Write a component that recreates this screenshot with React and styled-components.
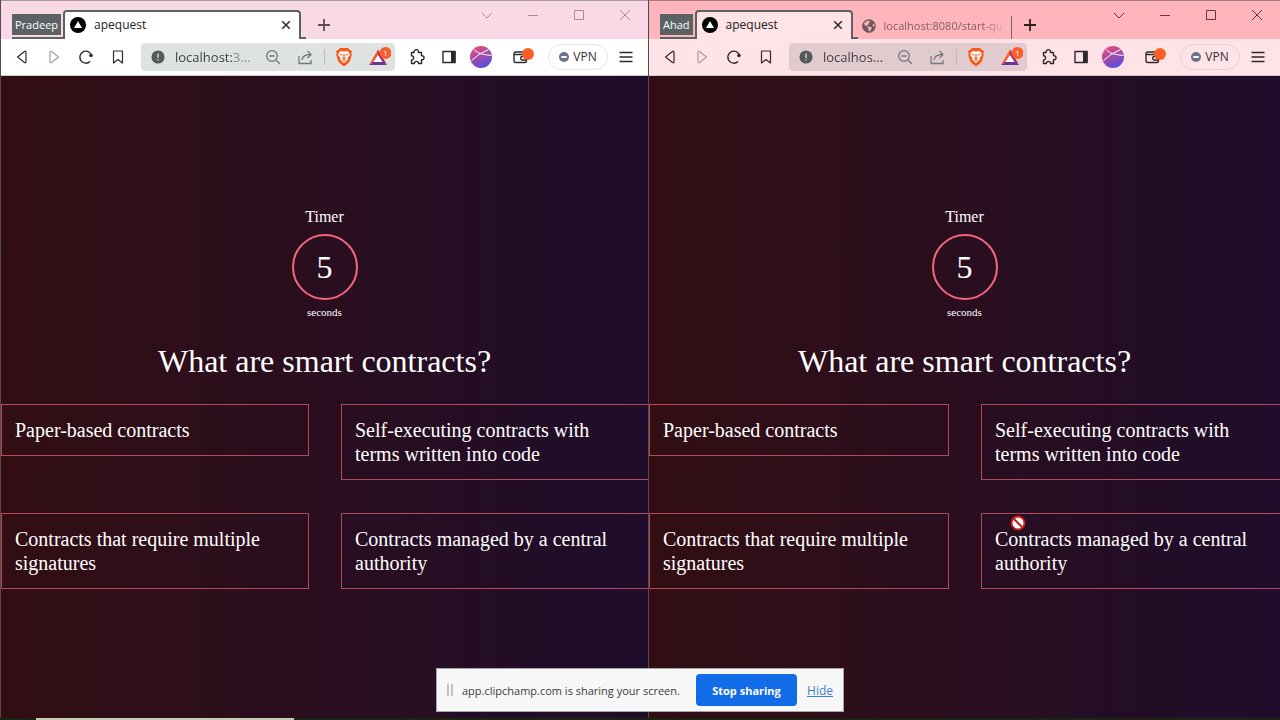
import React from "react";
import styled, { createGlobalStyle } from "styled-components";
import { FaGlobeAmericas } from "react-icons/fa";

const GlobalStyle = createGlobalStyle`
  * {
    box-sizing: border-box;
  }

  body {
    margin: 0;
    background-color: #1c2416;
    font-family: "Open Sans", "Noto Sans", sans-serif;
  }

  button {
    padding: 0;
    border: 0;
    background: none;
    font-family: inherit;
  }
`;

const Desktop = styled.div`
  display: flex;
  flex-direction: column;
  min-height: 100vh;
`;

const Windows = styled.div`
  display: grid;
  grid-template-columns: 81fr 79fr;
  flex: 1;
`;

const Taskbar = styled.footer`
  height: 2px;
  background: linear-gradient(
    90deg,
    #1c2416 36px,
    #c3ccb3 36px,
    #c3ccb3 294px,
    #1c2416 294px
  );
`;

const Window = styled.section`
  display: flex;
  flex-direction: column;
  min-width: 0;
  overflow: hidden;
  border-left: 1px solid #55484c;
`;

const TabStrip = styled.header`
  display: flex;
  align-items: flex-end;
  height: 39px;
  padding-left: 11px;
  border-top: 1px solid ${({ $edge }) => $edge};
  background-color: ${({ $color }) => $color};
`;

const Group = styled.div`
  height: 25px;
  padding-right: 2px;
  border-bottom: 2px solid #5b6264;
`;

const GroupButton = styled.button`
  display: block;
  height: 21px;
  padding: 0 3px;
  background-color: #5b6264;
  color: #fff;
  font-size: 11px;
  line-height: 20px;
`;

const Tab = styled.div`
  display: flex;
  align-items: center;
  gap: 8px;
  width: ${({ $width }) => $width}px;
  height: 29px;
  padding: 0 4px 2px 5px;
  border: 2px solid #5b6264;
  border-bottom: 0;
  border-radius: 4px 4px 0 0;
  background-color: ${({ $color }) => $color};
  color: #222;
  font-size: 12px;
  font-weight: 500;
`;

const TabFoot = styled.div`
  width: 5px;
  height: 2px;
  background-color: #5b6264;
`;

const TabTitle = styled.span`
  flex: 1;
  white-space: nowrap;
`;

const IdleTab = styled.div`
  display: flex;
  align-items: center;
  gap: 8px;
  width: 154px;
  height: 23px;
  padding: 0 4px 4px;
  border-right: 1px solid #7f6165;
  color: #805f63;
  font-size: 11px;

  svg {
    flex: none;
  }

  span {
    mask-image: linear-gradient(90deg, #000 80%, transparent);
  }
`;

const IconButton = styled.button`
  display: flex;
  align-items: center;
  justify-content: center;
  flex: none;
  width: 32px;
  height: 28px;
  color: ${({ $color }) => $color || "#2b2b2d"};
`;

const CloseTab = styled(IconButton)`
  width: 18px;
  height: 18px;
`;

const NewTab = styled(IconButton)`
  margin-left: 2px;
`;

const Controls = styled.div`
  display: flex;
  align-self: flex-start;
  margin-left: auto;

  button {
    width: 46px;
  }
`;

const Toolbar = styled.div`
  display: flex;
  align-items: center;
  height: 37px;
  padding: 0 6px 1px 5px;
  border-bottom: 1px solid #d0c9cb;
  background-color: ${({ $color }) => $color};
`;

const Address = styled.div`
  display: flex;
  align-items: center;
  flex: 1;
  min-width: 0;
  height: 28px;
  margin: 0 6px 0 7px;
  padding-left: 10px;
  border-radius: 4px;
  background-color: ${({ $color }) => $color};
  color: #55595c;
`;

const AddressInput = styled.input`
  flex: 1;
  min-width: 0;
  margin-left: 10px;
  padding: 0;
  border: 0;
  outline: 0;
  background: linear-gradient(
    90deg,
    #3a3b3e ${({ $host }) => $host}px,
    #85888b ${({ $host }) => $host}px
  );
  background-clip: text;
  color: transparent;
  font-family: inherit;
  font-size: 13px;
`;

const Divider = styled.span`
  width: 1px;
  height: 16px;
  margin: 0 3px;
  background-color: #bcbcbe;
`;

const Shields = styled(IconButton)`
  margin-right: 3px;
`;

const Wallet = styled(IconButton)`
  margin: 0 9px 0 10px;
`;

const Vpn = styled.button`
  display: flex;
  align-items: center;
  justify-content: center;
  gap: 4px;
  width: 60px;
  height: 26px;
  margin-right: 2px;
  border: 1px solid ${({ $edge }) => $edge};
  border-radius: 13px;
  color: #303238;
  font-size: 12px;
`;

const Page = styled.main`
  display: flex;
  flex: 1;
  flex-direction: column;
  align-items: center;
  justify-content: center;
  background: linear-gradient(90deg, #320e13, #290e1f 50%, #1f0d2b);
  color: #fff;
  font-family: "Liberation Serif", serif;
`;

const TimerLabel = styled.div`
  margin-bottom: 5px;
  font-size: 16px;
  line-height: 24px;
`;

const TimerCircle = styled.div`
  display: flex;
  align-items: center;
  justify-content: center;
  width: 66px;
  height: 66px;
  border: 2px solid #f5667a;
  border-radius: 50%;
  font-size: 32px;
`;

const Seconds = styled.div`
  margin: 4px 0 21px;
  font-size: 11px;
  line-height: 16px;
`;

const Question = styled.h1`
  margin: 0 0 23px;
  font-size: 32px;
  font-weight: 400;
  line-height: 40px;
`;

/* the grid runs one pixel past the window, so the last border is cut off */
const Answers = styled.div`
  display: grid;
  grid-template-columns: 1fr 1fr;
  align-items: start;
  align-self: stretch;
  gap: 33px 32px;
  margin-right: -1px;
`;

const Answer = styled.button`
  padding: 13px;
  border: 1px solid #b24a5b;
  color: #fff;
  font-size: 20px;
  line-height: 24px;
  text-align: left;
  cursor: not-allowed;
`;

const ShareBar = styled.aside`
  position: fixed;
  bottom: 8px;
  left: 50%;
  display: flex;
  align-items: center;
  width: 408px;
  height: 44px;
  padding: 0 10px;
  transform: translateX(-50%);
  border: 1px solid #a5a5a8;
  background-color: #f7f7f8;
  color: #3c3c3e;
  font-size: 11px;
  white-space: nowrap;
`;

const Grip = styled.span`
  width: 6px;
  height: 12px;
  margin-right: 9px;
  border: solid #c3c3c5;
  border-width: 0 2px;
`;

const StopButton = styled.button`
  width: 101px;
  height: 32px;
  margin: 0 10px 0 auto;
  border-radius: 4px;
  background-color: #126ce8;
  color: #fff;
  font-size: 11px;
  font-weight: 700;
`;

const HideLink = styled.a`
  color: #3f7fc8;
  font-size: 12px;
`;

const Cursor = styled.svg`
  position: fixed;
  top: 515px;
  left: 1010px;
`;

const Icon = ({ size = 16, children, ...rest }) => (
  <svg
    width={size}
    height={size}
    viewBox="0 0 16 16"
    fill="none"
    stroke="currentColor"
    strokeWidth="1.2"
    aria-hidden="true"
    {...rest}
  >
    {children}
  </svg>
);

const SiteLogo = () => (
  <Icon stroke="none">
    <circle cx="8" cy="8" r="8" fill="#000" />
    <path d="M8 4l4 7H4z" fill="#fff" />
  </Icon>
);

const BraveIcon = () => (
  <Icon size={20} viewBox="0 0 20 20" stroke="none">
    <path d="M6 1h8l2 2 2 1-.6 2 .3 2-1.700 6-2 2.500L10 19.500 6 16.500 4 14 2.300 8l.3-2L2 4l2-1z" fill="#f9591c" />
    <path d="M6.500 4L10 4.600 13.500 4l2.300 3-.5 2-2 2 .6 1.500L10 16l-3.900-3.500.6-1.500-2-2-.5-2z" fill="#fff" />
    <path d="M6 7.500l2.500.5M14 7.500l-2.500.5M10 7v4M8 11.500l2-.6 2 .6M8.500 13.500L10 13l1.500.5" stroke="#f9591c" />
  </Icon>
);

const RewardsIcon = () => (
  <Icon size={24} viewBox="0 0 24 24" stroke="none">
    <path d="M11 4.500L2 20l5-3 4-6z" fill="#f9592b" />
    <path d="M11 4.500L20 20l-5-3-4-6z" fill="#9b2c6f" />
    <path d="M2 20h18l-5-3.500H7z" fill="#6a3595" />
    <path d="M11 10l4.500 7h-9z" fill="#fff" />
    <circle cx="18.500" cy="8" r="6" fill="#fb5e2a" />
    <text x="18.500" y="11" fontSize="8" textAnchor="middle" fill="#fff">1</text>
  </Icon>
);

const PuzzleIcon = () => (
  <Icon strokeWidth="1.400">
    <path
      d="M2.500 3.500H5.200a2.200 2.200 0 114.200 0h3.100v3.200a2.100 2.100 0 110 4.100v3.700H9.600a2.100 2.100 0 00-4.200 0H2.500v-3.500a2.100 2.100 0 000-4.200z"
      strokeLinejoin="round"
    />
  </Icon>
);

const Avatar = ({ id }) => (
  <Icon size={22} viewBox="0 0 22 22">
    <defs>
      <linearGradient id={id} x1="0.2" y1="0" x2="0.7" y2="1">
        <stop offset="0" stopColor="#ee4a78" />
        <stop offset="0.5" stopColor="#a04cab" />
        <stop offset="1" stopColor="#504ee0" />
      </linearGradient>
    </defs>
    <circle cx="11" cy="11" r="11" fill={`url(#${id})`} stroke="none" />
    <path d="M1.500 14.500Q8 8 18.500 3.500M4 3.500Q8 8.500 21.500 9.500" stroke="#fff" strokeWidth="1" />
  </Icon>
);

const WalletIcon = () => (
  <Icon size={22} viewBox="0 0 22 22" strokeWidth="1.400">
    <path d="M12 6H3.500A1.500 1.500 0 002 7.500V15a1.500 1.500 0 001.500 1.500H13a1.500 1.500 0 001.500-1.500v-1M2 8.500h10M14.500 10.500H10a1.800 1.800 0 000 3.500h4.500z" />
    <circle cx="16" cy="8" r="6" fill="#fd5e26" stroke="none" />
  </Icon>
);

const ArrowIcon = ({ flip }) => (
  <Icon>
    <path
      d={flip ? "M4 3.200v9.600q.2 1.500 1.500.7L12.500 8 5.500 2.500Q4.200 1.700 4 3.200z" : "M12 3.200v9.600q-.2 1.500-1.500.7L3.500 8l7-5.500q1.300-.8 1.500.7z"}
      strokeLinejoin="round"
    />
  </Icon>
);

const windows = [
  {
    id: "pradeep",
    user: "Pradeep",
    frame: "#f9d9e6",
    edge: "#a99aa1",
    bar: "#ffffff",
    field: "#dfe2e2",
    pill: "#e4e5e7",
    controls: "#a08e97",
    newTab: "#5c5056",
    tabWidth: 238,
    address: "localhost:3...",
    host: 57,
  },
  {
    id: "ahad",
    user: "Ahad",
    frame: "#ffb5bb",
    edge: "#a87a7f",
    bar: "#ffe3e6",
    field: "#e1cbce",
    pill: "#efcfd3",
    controls: "#573b3f",
    newTab: "#2e1d20",
    tabWidth: 158,
    idleTab: "localhost:8080/start-qu",
    address: "localhos...",
    host: 90,
  },
];

const answers = [
  "Paper-based contracts",
  "Self-executing contracts with terms written into code",
  "Contracts that require multiple signatures",
  "Contracts managed by a central authority",
];

const Quiz = () => (
  <Page>
    <TimerLabel>Timer</TimerLabel>
    <TimerCircle>5</TimerCircle>
    <Seconds>seconds</Seconds>
    <Question>What are smart contracts?</Question>
    <Answers>
      {answers.map((answer) => (
        <Answer key={answer}>{answer}</Answer>
      ))}
    </Answers>
  </Page>
);

const Browser = ({ win }) => (
  <Window>
    <TabStrip $color={win.frame} $edge={win.edge}>
      <Group>
        <GroupButton>{win.user}</GroupButton>
      </Group>
      <Tab $width={win.tabWidth} $color={win.bar}>
        <SiteLogo />
        <TabTitle>apequest</TabTitle>
        <CloseTab aria-label="Close tab">
          <Icon size={10} strokeWidth="2.4">
            <path d="M2 2l12 12M14 2L2 14" />
          </Icon>
        </CloseTab>
      </Tab>
      <TabFoot />
      {win.idleTab && (
        <IdleTab>
          <FaGlobeAmericas size={14} color="#6b5a5e" />
          <TabTitle>{win.idleTab}</TabTitle>
        </IdleTab>
      )}
      <NewTab aria-label="New tab" $color={win.newTab}>
        <Icon size={12} strokeWidth="2.4">
          <path d="M8 0v16M0 8h16" />
        </Icon>
      </NewTab>
      <Controls>
        <IconButton $color={win.controls} aria-label="Search tabs">
          <Icon strokeWidth="1"><path d="M3 6l5 5 5-5" /></Icon>
        </IconButton>
        <IconButton $color={win.controls} aria-label="Minimize">
          <Icon strokeWidth="1"><path d="M3 8.500h10" /></Icon>
        </IconButton>
        <IconButton $color={win.controls} aria-label="Maximize">
          <Icon strokeWidth="1"><path d="M3.500 3.500h9v9h-9z" /></Icon>
        </IconButton>
        <IconButton $color={win.controls} aria-label="Close">
          <Icon strokeWidth="1"><path d="M3 3l10 10M13 3L3 13" /></Icon>
        </IconButton>
      </Controls>
    </TabStrip>
    <Toolbar $color={win.bar}>
      <IconButton aria-label="Back"><ArrowIcon /></IconButton>
      <IconButton aria-label="Forward" $color="#a5a0a2"><ArrowIcon flip /></IconButton>
      <IconButton aria-label="Reload">
        <Icon strokeWidth="1.4">
          <path d="M12 12.500A6 6 0 1113.200 5.500" />
          <circle cx="13" cy="6.500" r="1.800" fill="currentColor" stroke="none" />
        </Icon>
      </IconButton>
      <IconButton aria-label="Bookmark">
        <Icon><path d="M3.500 2h9v12L8 10.500 3.500 14z" strokeLinejoin="round" /></Icon>
      </IconButton>
      <Address $color={win.field}>
        <Icon size={14} stroke="none">
          <circle cx="8" cy="8" r="7.5" fill="currentColor" />
          <path d="M8 4v5M8 10.500v1.500" stroke="#dcdcdd" strokeWidth="1.5" />
        </Icon>
        <AddressInput aria-label="Address" defaultValue={win.address} $host={win.host} />
        <IconButton aria-label="Zoom" $color="#77797c">
          <Icon strokeWidth="1.3">
            <circle cx="7" cy="7" r="5.3" />
            <path d="M11 11l4 4M4.500 7h5" />
          </Icon>
        </IconButton>
        <IconButton aria-label="Share" $color="#77797c">
          <Icon strokeWidth="1.3">
            <path d="M2 7v7.500h12V11M5 11q.5-5.500 8.500-5.500M10.500 2l3.500 3.500L10.500 9" />
          </Icon>
        </IconButton>
        <Divider />
        <Shields aria-label="Brave Shields"><BraveIcon /></Shields>
        <IconButton aria-label="Brave Rewards"><RewardsIcon /></IconButton>
      </Address>
      <IconButton aria-label="Extensions"><PuzzleIcon /></IconButton>
      <IconButton aria-label="Sidebar">
        <Icon>
          <path d="M2 2.500h12v11H2z" strokeWidth="1.4" />
          <path d="M10 2h4.500v12H10z" fill="currentColor" stroke="none" />
        </Icon>
      </IconButton>
      <IconButton aria-label="Profile"><Avatar id={win.id} /></IconButton>
      <Wallet aria-label="Wallet"><WalletIcon /></Wallet>
      <Vpn $edge={win.pill}>
        <Icon size={10} stroke="none">
          <circle cx="8" cy="8" r="8" fill="#67738b" />
          <path d="M3.500 6.500h9v3h-9z" fill="#fff" />
        </Icon>
        VPN
      </Vpn>
      <IconButton aria-label="Menu">
        <Icon strokeWidth="1.4"><path d="M1.500 3.500h13M1.500 8h13M1.500 12.500h13" /></Icon>
      </IconButton>
    </Toolbar>
    <Quiz />
  </Window>
);

const App = () => (
  <Desktop>
    <GlobalStyle />
    <Windows>
      {windows.map((win) => (
        <Browser key={win.id} win={win} />
      ))}
    </Windows>
    <Taskbar />
    <ShareBar>
      <Grip />
      <span>app.clipchamp.com is sharing your screen.</span>
      <StopButton>Stop sharing</StopButton>
      <HideLink href="#hide">Hide</HideLink>
    </ShareBar>
    <Cursor width="16" height="16" viewBox="0 0 16 16" aria-hidden="true">
      <circle cx="8" cy="8" r="6.5" fill="#fff" stroke="#c5201c" strokeWidth="2" />
      <path d="M3.500 3.500l9 9" stroke="#c5201c" strokeWidth="2" />
    </Cursor>
  </Desktop>
);

export default App;
